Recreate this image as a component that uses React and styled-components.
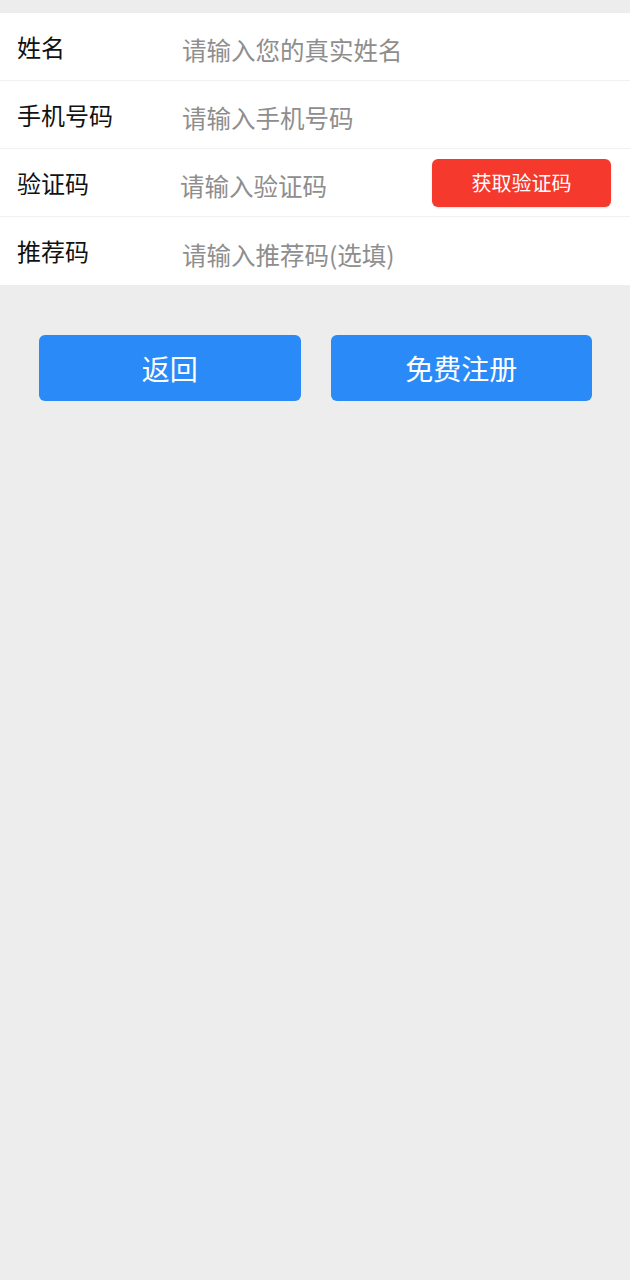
import React from "react";
import styled, { createGlobalStyle } from "styled-components";

const Global = createGlobalStyle`
  html, body { margin: 0; padding: 0; background: #ededed; }
  body { font-family: "Noto Sans CJK SC", "Noto Sans", sans-serif; }
  #root { min-height: 1280px; background: #ededed; }
`;

const Page = styled.div`
  padding-top: 13px;
`;

const Form = styled.div`
  background: #fff;
  display: flex;
  flex-direction: column;
`;

const Row = styled.div`
  display: flex;
  align-items: center;
  height: 68px;
  box-sizing: border-box;
  padding: 0 19px 0 17px;
  border-bottom: ${(p) => (p.$last ? "none" : "1px solid #f1f1f1")};
`;

const Label = styled.div`
  width: 165px;
  flex-shrink: 0;
  font-size: 24px;
  color: #111;
  line-height: 1;
`;

const Input = styled.input`
  flex: 1;
  min-width: 0;
  border: none;
  outline: none;
  background: transparent;
  padding: 0;
  margin-top: 6px;
  margin-left: ${(p) => p.$shift || 0}px;
  font-family: "Noto Sans CJK SC", "Noto Sans", sans-serif;
  font-size: 24.5px;
  color: #333;
  &::placeholder { color: #8e8e8e; }
`;

const CodeButton = styled.button`
  width: 179px;
  height: 48px;
  flex-shrink: 0;
  border: none;
  border-radius: 6px;
  background: #f5392d;
  color: #fff;
  font-family: "Noto Sans CJK SC", "Noto Sans", sans-serif;
  font-size: 20px;
  box-shadow: 0 1px 2px rgba(0,0,0,0.12);
  padding: 0;
`;

const Actions = styled.div`
  display: flex;
  gap: 30px;
  padding: 50px 38px 0 39px;
`;

const ActionButton = styled.button`
  flex: 1;
  height: 66px;
  border: none;
  border-radius: 6px;
  background: #2a8af8;
  color: #fff;
  font-family: "Noto Sans CJK SC", "Noto Sans", sans-serif;
  font-size: 28px;
  padding: 0;
`;

export default function App() {
  return (
    <Page>
      <Global />
      <Form>
        <Row>
          <Label>姓名</Label>
          <Input placeholder="请输入您的真实姓名" />
        </Row>
        <Row>
          <Label>手机号码</Label>
          <Input placeholder="请输入手机号码" />
        </Row>
        <Row>
          <Label>验证码</Label>
          <Input $shift={-2} placeholder="请输入验证码" />
          <CodeButton>获取验证码</CodeButton>
        </Row>
        <Row $last>
          <Label>推荐码</Label>
          <Input placeholder="请输入推荐码(选填)" />
        </Row>
      </Form>
      <Actions>
        <ActionButton>返回</ActionButton>
        <ActionButton>免费注册</ActionButton>
      </Actions>
    </Page>
  );
}
